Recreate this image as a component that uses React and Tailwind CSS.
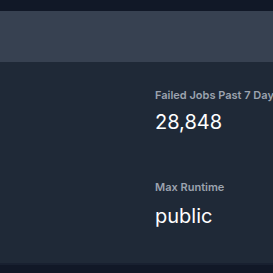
export default function App() {
  return (
    <div
      className="w-[273px] h-[273px] overflow-hidden bg-[#111827] flex flex-col"
      style={{ fontFamily: "Inter, 'Noto Sans', sans-serif" }}
    >
      <div className="h-[11px] shrink-0 bg-[#111827]" />
      <div className="h-[51px] shrink-0 bg-[#374151]" />
      <div className="h-[201px] shrink-0 bg-[#1f2937] pl-[155px] pt-[25px] flex flex-col whitespace-nowrap">
        <div className="text-[11px] leading-4 font-semibold text-[#9ca3af]">Failed Jobs Past 7 Days</div>
        <div className="mt-[5px] text-[20px] leading-7 font-normal text-white">28,848</div>
        <div className="mt-[43px] text-[11px] leading-4 font-semibold text-[#9ca3af]">Max Runtime</div>
        <div className="mt-[7px] text-[20px] leading-7 font-normal text-white">public</div>
      </div>
      <div className="h-[2px] shrink-0 bg-[#182030]" />
      <div className="flex-1 bg-[#111827]" />
    </div>
  );
}
